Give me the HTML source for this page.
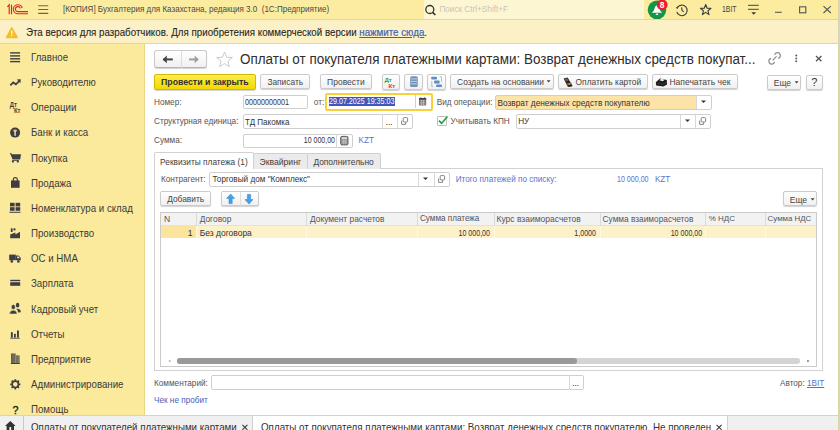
<!DOCTYPE html>
<html><head><meta charset="utf-8">
<style>
*{box-sizing:border-box;margin:0;padding:0}
html,body{width:840px;height:430px;overflow:hidden;background:#fff}
body{position:relative;font-family:"Liberation Sans",sans-serif;color:#333}
.a{position:absolute;white-space:pre}
.t{position:absolute;white-space:pre;line-height:12px;height:12px}
svg{position:absolute;overflow:visible}
/* top bar */
#top{left:0;top:0;width:840px;height:20px;background:#FBEC9F;border-bottom:1px solid #EBD98A}
#warn{left:0;top:20px;width:840px;height:24px;background:#FCF0C6;border-bottom:1px solid #DDD4B4}
#side{left:0;top:44px;width:145px;height:371px;background:#FBEA9B;border-right:1px solid #E8D689}
#main{left:145px;top:44px;width:693px;height:371px;background:#fff}
#redge{left:838px;top:0;width:2px;height:430px;background:linear-gradient(90deg,#DCD4A6 0,#DCD4A6 1px,#D4D4D4 1px)}
#bot{left:0;top:414.6px;width:840px;height:15.4px;background:#F0F0F0;border-top:1.5px solid #D2D2D2}
.side{font-size:11px;color:#3b3b3b;left:31px;transform:scaleX(.882);transform-origin:0 0;margin-top:0.1px}
.f{font-size:8.2px;color:#555;margin-top:0.9px}
.btn{position:absolute;height:16px;border:1px solid #CBCBCB;border-radius:2px;background:linear-gradient(#FFFFFF,#F0F0F0);box-shadow:0 1px 1px rgba(0,0,0,0.18)}
.inp{position:absolute;height:14px;border:1px solid #CFCFCF;border-radius:2px;background:#fff}
.num{font-size:8.2px;transform:scaleX(.866);transform-origin:100% 50%}
.numl{font-size:8.2px;transform:scaleX(.866);transform-origin:0 50%}
.sep{position:absolute;top:0;bottom:0;width:1px;background:#D4D4D4}
</style></head><body>
<div id="top" class="a"></div>
<div id="warn" class="a"></div>
<div id="side" class="a"></div>
<div id="main" class="a"></div>
<div id="bot" class="a"></div>
<div id="redge" class="a"></div>

<!-- ===== TOP BAR ===== -->
<svg style="left:0;top:0" width="60" height="20" viewBox="0 0 60 20">
  <g fill="none" stroke="#D9272E" stroke-width="1.15">
    <path d="M7.4 6.8 L9.2 4.8 V14.3"/>
    <path d="M11.5 4.6 V14.3"/>
    <path d="M22.2 8.2 A4.5 4.5 0 1 0 18.1 13.7 H28"/>
    <path d="M20.3 8.4 A2.5 2.5 0 1 0 18.1 11.6 H28"/>
  </g>
  <g stroke="#6B6455" stroke-width="1.1">
    <path d="M38.2 5.7 H48.2 M38.2 9.5 H48.2 M38.2 13.4 H48.2"/>
  </g>
</svg>
<div class="t" style="left:62.5px;top:2.95px;font-size:9.7px;color:#4a4a4a;transform:scaleX(.829);transform-origin:0 0">[КОПИЯ] Бухгалтерия для Казахстана, редакция 3.0  (1С:Предприятие)</div>
<div class="a" style="left:423.5px;top:0;width:220px;height:18.5px;background:#FDF6D3"></div>
<svg style="left:420px;top:0" width="20" height="20" viewBox="0 0 20 20">
  <circle cx="9.8" cy="9.5" r="4" fill="none" stroke="#333" stroke-width="1.3"/>
  <path d="M12.6 12.4 L15.4 15" stroke="#333" stroke-width="1.7"/>
</svg>
<div class="t" style="left:439.4px;top:3.5px;font-size:8.2px;color:#C9C4B6">Поиск Ctrl+Shift+F</div>
<svg style="left:640px;top:0" width="200" height="20" viewBox="0 0 200 20">
  <circle cx="17" cy="9.8" r="9.3" fill="#14964A"/>
  <path d="M11.8 12.8 H22.2 L20.4 11 L18.6 6.2 Q17 4.8 15.4 6.2 L13.6 11 Z" fill="#fff"/>
  <ellipse cx="17" cy="14.3" rx="1.4" ry="0.7" fill="#fff"/>
  <circle cx="22.2" cy="4.8" r="5.4" fill="#EE1D24"/>
  <text x="22.2" y="7.9" text-anchor="middle" font-family="Liberation Sans" font-weight="bold" font-size="8.4" fill="#fff">8</text>
  <!-- history -->
  <g fill="none" stroke="#3C3C3C" stroke-width="1.1">
    <path d="M37.6 7.2 A5.3 5.3 0 1 1 36.8 12"/>
    <path d="M41.6 7.4 L42 10.2 L43.6 12"/>
  </g>
  <circle cx="37.2" cy="7.7" r="1" fill="#3C3C3C"/>
  <!-- star -->
  <path d="M65.7 4.5 L67.1 8.2 L71 8.4 L68 10.8 L69 14.6 L65.7 12.4 L62.4 14.6 L63.4 10.8 L60.4 8.4 L64.3 8.2 Z" fill="none" stroke="#3C3C3C" stroke-width="1.1" stroke-linejoin="round"/>
  <g stroke="#6B6455" stroke-width="1.1"><path d="M108 5.4 H118.8 M108 9.4 H118.8"/></g>
  <path d="M111.4 12.2 H116 L113.7 14.8 Z" fill="#333"/>
  <path d="M135 12.3 H141.7" stroke="#555" stroke-width="1.1"/>
  <rect x="159.6" y="6.8" width="6.2" height="6" fill="none" stroke="#555" stroke-width="1.1"/>
  <path d="M183.5 6.2 L190.8 13 M190.8 6.2 L183.5 13" stroke="#555" stroke-width="1.1"/>
</svg>
<div class="t" style="left:722px;top:3.4px;font-size:9px;color:#444;transform:scaleX(.765);transform-origin:0 0">1BIT</div>

<!-- ===== WARNING ===== -->
<svg style="left:0;top:20px" width="24" height="24" viewBox="0 0 24 24">
  <path d="M11.8 7.6 L17.3 17.6 H6.3 Z" fill="#F4BE2A" stroke="#F4BE2A" stroke-width="1.2" stroke-linejoin="round"/>
  <rect x="11.2" y="10.6" width="1.2" height="3.6" fill="#fff"/>
  <rect x="11.2" y="15" width="1.2" height="1.2" fill="#fff"/>
</svg>
<div class="t" style="left:26px;top:26.2px;font-size:11px;color:#262626;-webkit-text-stroke:0.1px #262626;transform:scaleX(.886);transform-origin:0 0">Эта версия для разработчиков. Для приобретения коммерческой версии <span style="color:#3F63B4;-webkit-text-stroke:0.2px #3F63B4;text-decoration:underline">нажмите сюда</span>.</div>

<!-- SIDEBAR placeholder -->
<div class="t side" style="top:50.80px">Главное</div>
<div class="t side" style="top:75.97px">Руководителю</div>
<div class="t side" style="top:101.14px">Операции</div>
<div class="t side" style="top:126.31px">Банк и касса</div>
<div class="t side" style="top:151.48px">Покупка</div>
<div class="t side" style="top:176.65px">Продажа</div>
<div class="t side" style="top:201.82px">Номенклатура и склад</div>
<div class="t side" style="top:226.99px">Производство</div>
<div class="t side" style="top:252.16px">ОС и НМА</div>
<div class="t side" style="top:277.33px">Зарплата</div>
<div class="t side" style="top:302.50px">Кадровый учет</div>
<div class="t side" style="top:327.67px">Отчеты</div>
<div class="t side" style="top:352.84px">Предприятие</div>
<div class="t side" style="top:378.01px">Администрирование</div>
<div class="t side" style="top:403.18px">Помощь</div>
<svg style="left:0;top:44px" width="30" height="371" viewBox="0 44 30 371">
 <g fill="#3E3E44" stroke="none">
  <!-- Главное -->
  <rect x="10.1" y="52.2" width="10" height="1.4"/><rect x="10.1" y="55.2" width="10" height="1.4"/><rect x="10.1" y="58.1" width="10" height="1.4"/><rect x="10.1" y="60.9" width="10" height="1.4"/>
  <!-- Руководителю -->
  <path d="M10.3 85.4 L13.2 82.4 L15.9 84.3 L19.4 80.9" fill="none" stroke="#3E3E44" stroke-width="1.8"/>
  <path d="M16.8 79.6 L20.8 79.2 L20.4 83.2 Z"/>
  <!-- Операции -->
  <text x="9.8" y="107.4" font-family="Liberation Sans" font-weight="bold" font-size="6.6" transform="translate(9.8 0) scale(0.9 1) translate(-9.8 0)">Дт</text>
  <text x="14" y="113.4" font-family="Liberation Sans" font-weight="bold" font-size="6.6" transform="translate(14 0) scale(0.9 1) translate(-14 0)">Кт</text>
  <!-- Банк -->
  <circle cx="15.1" cy="132.6" r="5"/>
  <ellipse cx="15.1" cy="130.6" rx="1.9" ry="1.2" fill="#D8CB8A"/><rect x="14.4" y="131" width="1.4" height="4.8" fill="#FBEA9B"/>
  <!-- Покупка -->
  <path d="M9.8 152.8 L11.4 153.2 L11.9 154.2 H21 L20.2 159.6 H12.6 Z"/><rect x="12.2" y="160" width="6.8" height="0.8"/>
  <circle cx="12.9" cy="161.6" r="1.1"/><circle cx="17.8" cy="161.6" r="1.1"/>
  <!-- Продажа -->
  <rect x="11" y="180.4" width="8.6" height="7.4"/>
  <path d="M13.3 181 V179.6 A2 2 0 0 1 17.3 179.6 V181" fill="none" stroke="#3E3E44" stroke-width="1.1"/>
  <!-- Номенклатура -->
  <rect x="10" y="202.8" width="4.6" height="3.6"/><rect x="15.6" y="202.8" width="4.6" height="3.6"/>
  <rect x="10" y="207.2" width="4.6" height="3.6"/><rect x="15.6" y="207.2" width="4.6" height="3.6"/>
  <rect x="9.5" y="211.8" width="11" height="1"/>
  <!-- Производство -->
  <path d="M10.2 234.4 L15.4 232.6 V234.4 L20 231.8 V238.2 H10.2 Z"/>
  <rect x="10.8" y="228.2" width="1.8" height="3.8" rx="0.5"/><rect x="13.4" y="228.2" width="2.1" height="2.4" rx="0.8"/>
  <!-- ОС и НМА truck -->
  <path d="M9.2 254.6 H15.8 V260.2 H9.2 Z"/>
  <path d="M15.8 255.6 H18.6 L20.8 258 V260.2 H15.8 Z"/>
  <circle cx="11.8" cy="261.4" r="1.3"/><circle cx="18.4" cy="261.4" r="1.3"/>
  <path d="M17.2 256.6 H18.6 L19.8 258.2 H17.2 Z" fill="#FBEA9B"/>
  <!-- Зарплата card -->
  <rect x="10.2" y="279.8" width="10" height="1.4"/>
  <rect x="10.2" y="282.2" width="10" height="3.6"/>
  <!-- Кадровый -->
  <ellipse cx="17.6" cy="305.2" rx="1.7" ry="2.4"/>
  <path d="M16.4 308.8 Q20.8 308.6 20.9 312.2 L18.2 312.6 Q17.9 310.2 16.4 308.8 Z"/>
  <ellipse cx="13.3" cy="307" rx="2.1" ry="2.6" stroke="#FBEA9B" stroke-width="0.6"/>
  <path d="M9.5 314 Q9.5 310.2 13.3 310.2 Q17.1 310.2 17.1 314 Z" stroke="#FBEA9B" stroke-width="0.5"/>
  <!-- Отчеты -->
  <rect x="10.9" y="332.2" width="1.9" height="5.4"/><rect x="14" y="333.8" width="1.8" height="3.8"/><rect x="17" y="330.5" width="1.9" height="7.1"/>
  <rect x="10.2" y="337.8" width="9.6" height="0.8"/>
  <!-- Предприятие -->
  <rect x="11" y="353.5" width="4.6" height="10.2" fill="#5a584e"/>
  <rect x="15.8" y="355.3" width="3.8" height="8.4" fill="#6e6b5c"/>
  <path d="M12.2 354.2 V363 M13.4 354.2 V363 M14.6 354.2 V363 M17 356 V363 M18.3 356 V363" stroke="#8f8a70" stroke-width="0.45"/>
  <rect x="10.8" y="363" width="9" height="1" fill="#3E3E44"/>
  <!-- Администрирование gear -->
  <g transform="translate(15.3 384.3)">
   <circle r="3.2" fill="none" stroke="#3E3E44" stroke-width="1.7"/>
   <path d="M-0.9 -5.1 H0.9 L0.6 -2.6 H-0.6 Z" transform="rotate(0)"/><path d="M-0.9 -5.1 H0.9 L0.6 -2.6 H-0.6 Z" transform="rotate(45)"/><path d="M-0.9 -5.1 H0.9 L0.6 -2.6 H-0.6 Z" transform="rotate(90)"/><path d="M-0.9 -5.1 H0.9 L0.6 -2.6 H-0.6 Z" transform="rotate(135)"/><path d="M-0.9 -5.1 H0.9 L0.6 -2.6 H-0.6 Z" transform="rotate(180)"/><path d="M-0.9 -5.1 H0.9 L0.6 -2.6 H-0.6 Z" transform="rotate(225)"/><path d="M-0.9 -5.1 H0.9 L0.6 -2.6 H-0.6 Z" transform="rotate(270)"/><path d="M-0.9 -5.1 H0.9 L0.6 -2.6 H-0.6 Z" transform="rotate(315)"/>
  </g>
 </g>
 <text x="15.5" y="413.6" text-anchor="middle" font-family="Liberation Sans" font-size="10.8" fill="#222" stroke="#222" stroke-width="0.35">?</text>
</svg>

<!-- MAIN placeholder -->
<!-- nav group -->
<div class="btn" style="left:154.3px;top:50.3px;width:53px;height:17.7px;border-radius:3px;border-color:#CACACA;border-bottom-color:#B5B5B5"></div>
<div class="a" style="left:181px;top:51px;width:1px;height:16.5px;background:#DDDDDD"></div>
<svg style="left:150px;top:46px" width="90" height="26" viewBox="0 0 90 26">
  <path d="M13.4 13.4 H22.8" stroke="#454545" stroke-width="2"/>
  <path d="M12.6 13.4 L16.8 9.6 V17.2 Z" fill="#454545"/>
  <path d="M39 13.4 H48" stroke="#A0A0A0" stroke-width="2"/>
  <path d="M48.8 13.4 L44.6 9.6 V17.2 Z" fill="#A0A0A0"/>
  <path d="M74.5 6 L76.6 11.3 L82.4 11.5 L77.9 15.2 L79.4 20.7 L74.5 17.6 L69.6 20.7 L71.1 15.2 L66.6 11.5 L72.4 11.3 Z" fill="none" stroke="#BCC6CE" stroke-width="0.9" stroke-linejoin="round"/>
</svg>
<div class="a" style="left:240.4px;top:50.4px;line-height:17px;font-size:15.2px;color:#2E2E2E;transform:scaleX(.885);transform-origin:0 0">Оплаты от покупателя платежными картами: Возврат денежных средств покупат...</div>
<svg style="left:760px;top:48px" width="70" height="22" viewBox="0 0 70 22">
  <g fill="none" stroke="#8A8A8A" stroke-width="1.2">
    <path d="M14.6 6.85 A2.9 2.9 0 1 1 18.15 10.4"/>
    <path d="M14.6 13.95 A2.9 2.9 0 1 1 11.05 10.4"/>
    <path d="M12.6 12.4 L16.6 8.4"/>
  </g>
  <circle cx="36.25" cy="7.5" r="0.95" fill="#555"/><circle cx="36.25" cy="10.4" r="0.95" fill="#555"/><circle cx="36.25" cy="13.3" r="0.95" fill="#555"/>
  <path d="M56 8 L61.4 13.2 M61.4 8 L56 13.2" stroke="#555" stroke-width="1.3"/>
</svg>

<!-- command bar -->
<div class="btn" style="left:154px;top:74.2px;width:102px;height:15.6px;border-color:#D3BA00;background:linear-gradient(#FFEC4D,#F4D800);border-radius:2px"></div>
<div class="t" style="left:161px;top:76px;font-size:8.76px;font-weight:bold;color:#333">Провести и закрыть</div>
<div class="btn" style="left:260.2px;top:74.3px;width:50px;height:15.2px"></div>
<div class="t" style="left:267.4px;top:76px;font-size:8.35px;color:#444">Записать</div>
<div class="btn" style="left:319.9px;top:74.3px;width:51.8px;height:15.2px"></div>
<div class="t" style="left:327.1px;top:76px;font-size:8.5px;color:#444">Провести</div>
<div class="btn" style="left:381.8px;top:74.2px;width:18.5px;height:15.4px"></div>
<div class="btn" style="left:404.2px;top:74.2px;width:19px;height:15.4px"></div>
<div class="btn" style="left:427.4px;top:74.2px;width:18.6px;height:15.4px"></div>
<svg style="left:378px;top:72px" width="72" height="20" viewBox="0 0 72 20">
  <text x="6.4" y="10.2" font-family="Liberation Sans" font-weight="bold" font-size="6.2" fill="#3C9C2C">Дт</text>
  <text x="10.6" y="16.2" font-family="Liberation Sans" font-weight="bold" font-size="6.2" fill="#E8342E">Кт</text>
  <rect x="32.1" y="4.3" width="7.7" height="10.7" rx="1.6" fill="#7093B8"/>
  <path d="M32.6 6.9 H39.3 M32.6 9.4 H39.3 M32.6 11.9 H39.3" stroke="#E6EEF6" stroke-width="0.7"/>
  <g fill="#5E8DBF">
   <rect x="53.2" y="4.8" width="5.8" height="2.6" rx="0.8"/><rect x="56.1" y="8.5" width="5.5" height="3" rx="0.6"/><rect x="58.2" y="12.5" width="5.7" height="2.4" rx="0.5"/>
  </g>
  <path d="M53.8 9 V14.6 H55.2 M61.6 4.8 H63.5 V10" fill="none" stroke="#8FB0D4" stroke-width="0.8"/>
</svg>
<div class="btn" style="left:450px;top:74.3px;width:104.3px;height:15.2px"></div>
<div class="t" style="left:457.1px;top:76px;font-size:8.38px;color:#444">Создать на основании</div>
<svg style="left:546px;top:79px" width="6" height="5" viewBox="0 0 6 5"><path d="M0.6 1.2 H4.6 L2.6 3.4 Z" fill="#444"/></svg>
<div class="btn" style="left:558.4px;top:74.4px;width:89.2px;height:15px"></div>
<svg style="left:555px;top:72px" width="24" height="20" viewBox="0 0 24 20">
  <path d="M8.6 6.6 L12.6 5.4 L17.2 13.2 Q17.4 14.4 16.2 14.8 L13.6 14.9 L12.6 14.6 Z" fill="#2E2424"/>
  <path d="M9.8 6.9 L12.2 6.2 L13.6 8.6 L11 9.4 Z" fill="#6A5A5A"/>
  <circle cx="12.6" cy="12.2" r="0.95" fill="#E23A2A"/><circle cx="14.2" cy="11.9" r="0.9" fill="#E8B42A"/><circle cx="15.7" cy="11.5" r="0.9" fill="#3AA83A"/>
</svg>
<div class="t" style="left:575.6px;top:76px;font-size:8.39px;color:#444">Оплатить картой</div>
<div class="btn" style="left:652.4px;top:74.4px;width:85.2px;height:15px"></div>
<svg style="left:648px;top:72px" width="24" height="20" viewBox="0 0 24 20">
  <path d="M7.8 10.2 L12 6.4 L18.8 8 L19 12.4 L15.4 14.6 L8.2 13.4 Z" fill="#1C1C1C"/>
  <path d="M11.4 8.2 L13.2 6.8 L16.6 7.8 L14.8 9.2 Z" fill="#F4F4F4"/>
  <path d="M9 11 L15 12.2 L18.4 10.2" fill="none" stroke="#555" stroke-width="0.5"/>
</svg>
<div class="t" style="left:669.4px;top:76px;font-size:8.55px;color:#444">Напечатать чек</div>
<div class="btn" style="left:767.4px;top:74.8px;width:33.3px;height:14.8px"></div>
<div class="t" style="left:773.8px;top:77px;font-size:8.5px;color:#444">Еще</div>
<svg style="left:793.6px;top:79.6px" width="6" height="5" viewBox="0 0 6 5"><path d="M0.6 1.2 H4.6 L2.6 3.4 Z" fill="#444"/></svg>
<div class="btn" style="left:805.5px;top:74.8px;width:17.8px;height:14.8px"></div>
<div class="t" style="left:811.2px;top:76.4px;font-size:11px;color:#333">?</div>

<!-- row 1 -->
<div class="t f" style="left:154px;top:96px">Номер:</div>
<div class="inp" style="left:243.4px;top:95.3px;width:64.8px;height:14.2px"></div>
<div class="t f numl" style="left:244.8px;top:96px;color:#333;transform:scaleX(.88)">00000000001</div>
<div class="t f" style="left:313.8px;top:96px">от:</div>
<div class="a" style="left:325.4px;top:92.9px;width:107.5px;height:18.4px;border:2px solid #F8D03C;border-radius:2px;background:#fff"></div>
<div class="a" style="left:328.9px;top:96.9px;width:66.4px;height:9.2px;background:#4056B8"></div>
<div class="t f numl" style="left:329px;top:95.6px;color:#fff;font-size:8.2px;transform:scaleX(.871)">29.07.2025 19:35:03</div>
<div class="a" style="left:415.2px;top:95.2px;width:1px;height:13px;background:#D0D0D0"></div>
<svg style="left:418px;top:96px" width="10" height="12" viewBox="0 0 10 12">
  <rect x="1" y="2" width="7.2" height="7.4" rx="0.9" fill="#707070"/>
  <path d="M1.8 4.6 H7.4 M1.8 6.4 H7.4 M1.8 8 H7.4 M3.6 4 V9 M5.5 4 V9" stroke="#ddd" stroke-width="0.5"/>
  <path d="M2.8 1.2 V2.6 M6.4 1.2 V2.6" stroke="#555" stroke-width="0.9"/><rect x="1" y="2" width="7.2" height="1.6" fill="#444"/>
</svg>
<div class="t f" style="left:436.7px;top:96px">Вид операции:</div>
<div class="inp" style="left:495.3px;top:95.4px;width:216.5px;height:14.3px;background:linear-gradient(90deg,#FCE4A8 0,#FCE4A8 200.5px,#fff 200.5px)"></div>
<div class="a" style="left:696px;top:95.4px;width:1px;height:13.6px;background:#D8D8D8"></div>
<div class="t f" style="left:497.4px;top:96px;color:#333;font-size:8.3px">Возврат денежных средств покупателю</div>
<svg style="left:700px;top:99px" width="8" height="6" viewBox="0 0 8 6"><path d="M1 1.4 H6 L3.5 4 Z" fill="#333"/></svg>

<!-- row 2 -->
<div class="t f" style="left:154px;top:115.4px">Структурная единица:</div>
<div class="inp" style="left:243.4px;top:114.4px;width:169.9px;height:14.7px"></div>
<div class="a" style="left:382px;top:114.4px;width:1px;height:14px;background:#D8D8D8"></div>
<div class="a" style="left:397.4px;top:114.4px;width:1px;height:14px;background:#D8D8D8"></div>
<div class="t f" style="left:245.4px;top:115.2px;color:#333;font-size:8.6px;transform:scaleX(.936);transform-origin:0 0">ТД Пакомка</div>
<div class="t f" style="left:385.8px;top:116px;color:#222">...</div>
<svg style="left:398px;top:114px" width="14" height="14" viewBox="0 0 14 14">
  <rect x="5.2" y="3.6" width="4.4" height="4.4" rx="0.9" fill="#fff" stroke="#666" stroke-width="0.8"/>
  <path d="M3.6 6.6 V10.2 Q3.6 10.4 3.9 10.4 H7.6 V8.4" fill="none" stroke="#666" stroke-width="0.8"/>
</svg>
<div class="a" style="left:437.2px;top:115.7px;width:10px;height:10px;border:1px solid #BEBEBE;border-radius:1px;background:#fff"></div>
<svg style="left:436px;top:113px" width="14" height="14" viewBox="0 0 14 14"><path d="M3 7.6 L5.6 10.4 L11.4 3.4" fill="none" stroke="#1E9A3C" stroke-width="1.6"/></svg>
<div class="t f" style="left:450.6px;top:115.4px">Учитывать КПН</div>
<div class="inp" style="left:516.1px;top:114.2px;width:195.3px;height:14.4px"></div>
<div class="a" style="left:680.4px;top:114.6px;width:1px;height:13.7px;background:#D8D8D8"></div>
<div class="a" style="left:695.4px;top:114.6px;width:1px;height:13.7px;background:#D8D8D8"></div>
<div class="t f" style="left:518.2px;top:115.4px;color:#333">НУ</div>
<svg style="left:684px;top:118px" width="8" height="6" viewBox="0 0 8 6"><path d="M1 1.4 H6 L3.5 4 Z" fill="#333"/></svg>
<svg style="left:696px;top:114px" width="14" height="14" viewBox="0 0 14 14">
  <rect x="5.2" y="3.6" width="4.4" height="4.4" rx="0.9" fill="#fff" stroke="#666" stroke-width="0.8"/>
  <path d="M3.6 6.6 V10.2 Q3.6 10.4 3.9 10.4 H7.6 V8.4" fill="none" stroke="#666" stroke-width="0.8"/>
</svg>

<!-- row 3 -->
<div class="t f" style="left:154px;top:134.5px">Сумма:</div>
<div class="inp" style="left:243.4px;top:133.5px;width:109.9px;height:14.7px"></div>
<div class="a" style="left:336.3px;top:133.5px;width:1px;height:14px;background:#D8D8D8"></div>
<div class="t f num" style="left:235.2px;top:134.5px;width:100px;text-align:right;color:#333;transform:scaleX(.855)">10 000,00</div>
<svg style="left:338px;top:134px" width="14" height="14" viewBox="0 0 14 14">
  <rect x="2.7" y="2.4" width="7.3" height="8.5" rx="1.2" fill="#9A9A9A" stroke="#505050" stroke-width="0.9"/>
  <rect x="3.8" y="3.4" width="5.1" height="1.4" fill="#EDEDED"/>
  <path d="M3.6 6.8 H9.2 M3.6 8.6 H9.2 M5.5 5.6 V10.6 M7.3 5.6 V10.6" stroke="#C8C8C8" stroke-width="0.5"/>
</svg>
<div class="t f" style="left:358.6px;top:134.5px;color:#5A74CF">KZT</div>

<!-- tabs -->
<div class="a" style="left:154.4px;top:168.3px;width:669px;height:203.2px;border:1px solid #D2D2D2"></div>
<div class="a" style="left:253.3px;top:152.5px;width:54.5px;height:16.3px;background:#EBEBEB;border:1px solid #CFCFCF;border-bottom:none;border-radius:2px 2px 0 0"></div>
<div class="a" style="left:307.3px;top:152.5px;width:73.3px;height:16.3px;background:#EBEBEB;border:1px solid #CFCFCF;border-bottom:none;border-radius:2px 2px 0 0"></div>
<div class="a" style="left:154.4px;top:152.3px;width:99.4px;height:17.2px;background:#fff;border:1px solid #D2D2D2;border-bottom:none;border-radius:2px 2px 0 0"></div>
<div class="t f" style="left:160.1px;top:155px;color:#404040;font-size:8.3px">Реквизиты платежа (1)</div>
<div class="t f" style="left:259.5px;top:155px;color:#404040;font-size:8.65px">Эквайринг</div>
<div class="t f" style="left:313.4px;top:155px;color:#404040;font-size:8.4px">Дополнительно</div>

<!-- panel content -->
<div class="t f" style="left:160.9px;top:173.5px">Контрагент:</div>
<div class="inp" style="left:209.2px;top:172.4px;width:240.8px;height:14.8px"></div>
<div class="a" style="left:418.4px;top:172.4px;width:1px;height:14.1px;background:#D8D8D8"></div>
<div class="a" style="left:434px;top:172.4px;width:1px;height:14.1px;background:#D8D8D8"></div>
<div class="t f" style="left:212.5px;top:173.5px;color:#333">Торговый дом "Комплекс"</div>
<svg style="left:422px;top:176px" width="8" height="6" viewBox="0 0 8 6"><path d="M1 1.4 H6 L3.5 4 Z" fill="#333"/></svg>
<svg style="left:434.5px;top:172px" width="14" height="14" viewBox="0 0 14 14">
  <rect x="5.2" y="3.6" width="4.4" height="4.4" rx="0.9" fill="#fff" stroke="#666" stroke-width="0.8"/>
  <path d="M3.6 6.6 V10.2 Q3.6 10.4 3.9 10.4 H7.6 V8.4" fill="none" stroke="#666" stroke-width="0.8"/>
</svg>
<div class="t f" style="left:455.7px;top:173px;color:#5A74CF">Итого платежей по списку:</div>
<div class="t f numl" style="left:617px;top:173px;color:#5A74CF">10 000,00</div>
<div class="t f" style="left:654.9px;top:173px;color:#5A74CF">KZT</div>

<div class="btn" style="left:160.1px;top:191px;width:50.9px;height:15.4px"></div>
<div class="t" style="left:167.2px;top:193.4px;font-size:8.4px;color:#444">Добавить</div>
<div class="btn" style="left:221.3px;top:191px;width:37.3px;height:15.4px"></div>
<div class="a" style="left:240.2px;top:192.3px;width:1px;height:13.6px;background:#DDD"></div>
<svg style="left:221px;top:191px" width="38" height="16" viewBox="0 0 38 16">
  <path d="M9.6 3 L13.6 7.4 H11.2 V12.6 H8 V7.4 H5.6 Z" fill="#43A3E6" stroke="#2A7FC0" stroke-width="0.5" stroke-linejoin="round"/>
  <path d="M28 13 L32 8.6 H29.6 V3.4 H26.4 V8.6 H24 Z" fill="#43A3E6" stroke="#2A7FC0" stroke-width="0.5" stroke-linejoin="round"/>
</svg>
<div class="btn" style="left:783.3px;top:191.1px;width:33.3px;height:15.2px"></div>
<div class="t" style="left:789.8px;top:194px;font-size:8.5px;color:#444">Еще</div>
<svg style="left:809.6px;top:196.6px" width="6" height="5" viewBox="0 0 6 5"><path d="M0.6 1.2 H4.6 L2.6 3.4 Z" fill="#444"/></svg>

<!-- table -->
<div class="a" style="left:160.4px;top:211.8px;width:657px;height:155.4px;border:1px solid #CACACA;background:#fff"></div>
<div class="a" style="left:161.4px;top:212.8px;width:655px;height:13.4px;background:#F2F2F2;border-bottom:1px solid #E2E2E2"></div>
<div class="a" style="left:161.4px;top:226.2px;width:655px;height:11.6px;background:#FDF1C9"></div>
<div class="a" style="left:161.4px;top:226.2px;width:34.8px;height:11.6px;background:#FBE49C"></div>
<div class="a" style="left:196.2px;top:212.8px;width:1px;height:13.4px;background:#DADADA"></div>
<div class="a" style="left:306.4px;top:212.8px;width:1px;height:13.4px;background:#DADADA"></div>
<div class="a" style="left:416.6px;top:212.8px;width:1px;height:13.4px;background:#DADADA"></div>
<div class="a" style="left:493.8px;top:212.8px;width:1px;height:13.4px;background:#DADADA"></div>
<div class="a" style="left:599.6px;top:212.8px;width:1px;height:13.4px;background:#DADADA"></div>
<div class="a" style="left:705.2px;top:212.8px;width:1px;height:13.4px;background:#DADADA"></div>
<div class="a" style="left:764.6px;top:212.8px;width:1px;height:13.4px;background:#DADADA"></div>
<div class="a" style="left:196.2px;top:226.2px;width:1px;height:11.6px;background:#FFF8E4"></div>
<div class="a" style="left:306.4px;top:226.2px;width:1px;height:11.6px;background:#FFF8E4"></div>
<div class="a" style="left:416.6px;top:226.2px;width:1px;height:11.6px;background:#FFF8E4"></div>
<div class="a" style="left:493.8px;top:226.2px;width:1px;height:11.6px;background:#FFF8E4"></div>
<div class="a" style="left:599.6px;top:226.2px;width:1px;height:11.6px;background:#FFF8E4"></div>
<div class="a" style="left:705.2px;top:226.2px;width:1px;height:11.6px;background:#FFF8E4"></div>
<div class="a" style="left:764.6px;top:226.2px;width:1px;height:11.6px;background:#FFF8E4"></div>
<div class="t f" style="left:164px;top:212.6px;font-size:8.6px;color:#555">N</div>
<div class="t f" style="left:199.7px;top:212.6px;font-size:8.4px;color:#555">Договор</div>
<div class="t f" style="left:310px;top:212.6px;font-size:8.4px;color:#555">Документ расчетов</div>
<div class="t f" style="left:420px;top:212.6px;font-size:8.14px;color:#555">Сумма платежа</div>
<div class="t f" style="left:496.5px;top:212.6px;font-size:8.5px;color:#555">Курс взаиморасчетов</div>
<div class="t f" style="left:602.6px;top:212.6px;font-size:8.31px;color:#555">Сумма взаиморасчетов</div>
<div class="t f" style="left:708.7px;top:212.6px;font-size:8px;color:#555">% НДС</div>
<div class="t f" style="left:767.6px;top:212.6px;font-size:7.9px;color:#555">Сумма НДС</div>
<div class="t f" style="left:160px;top:226.4px;width:32.6px;text-align:right;font-size:8.6px;color:#333">1</div>
<div class="t f" style="left:199.7px;top:226.4px;font-size:8.47px;color:#333">Без договора</div>
<div class="t f num" style="left:400px;top:227.2px;width:90px;text-align:right;color:#333">10 000,00</div>
<div class="t f num" style="left:500px;top:227.2px;width:96px;text-align:right;color:#333">1,0000</div>
<div class="t f num" style="left:602px;top:227.2px;width:100.2px;text-align:right;color:#333">10 000,00</div>
<!-- scrollbar -->
<div class="a" style="left:177.4px;top:358.2px;width:622.6px;height:5.4px;border-radius:2.7px;background:#D4D4D4"></div>
<div class="a" style="left:177.4px;top:358.2px;width:400px;height:5.4px;border-radius:2.7px;background:#999999"></div>
<svg style="left:160px;top:352px" width="660" height="14" viewBox="0 0 660 14">
  <path d="M8.4 8.9 L10.4 7.9 V9.9 Z" fill="#888"/>
  <path d="M649.4 8.9 L647.4 7.9 V9.9 Z" fill="#333"/>
</svg>


<div class="t f" style="left:154px;top:377px">Комментарий:</div>
<div class="inp" style="left:211px;top:375.3px;width:373.3px;height:15.0px"></div>
<div class="a" style="left:568.6px;top:375.3px;width:1px;height:14.3px;background:#D8D8D8"></div>
<div class="t f" style="left:572.2px;top:377.2px;color:#222">...</div>
<div class="t f" style="left:154px;top:394px;color:#3F5FB8">Чек не пробит</div>
<div class="t f" style="left:780px;top:376.7px;color:#555">Автор: <span style="color:#4F74C8;text-decoration:underline">1BIT</span></div>


<!-- BOTTOM placeholder -->
<div class="a" style="left:23.2px;top:416px;width:1px;height:14px;background:#C8C8C8"></div>
<svg style="left:0;top:414px" width="24" height="16" viewBox="0 0 24 16">
  <path d="M10.3 7 L15.6 12 H14 V16 H6.6 V12 H5 Z" fill="#333"/>
  <rect x="9.4" y="13" width="1.8" height="3" fill="#F0F0F0"/>
</svg>
<div class="a" style="left:252.4px;top:416px;width:1px;height:14px;background:#D0D0D0"></div>
<div class="a" style="left:253.4px;top:416px;width:473.8px;height:14px;background:#fff"></div>
<div class="a" style="left:727.2px;top:416px;width:1px;height:14px;background:#D0D0D0"></div>
<div class="a" style="left:31.4px;top:420.5px;line-height:12px;font-size:11px;color:#333;transform:scaleX(.8845);transform-origin:0 0">Оплаты от покупателей платежными картами</div>
<div class="a" style="left:261.3px;top:420.5px;line-height:12px;font-size:11px;color:#333;transform:scaleX(.89);transform-origin:0 0">Оплаты от покупателя платежными картами: Возврат денежных средств покупателю. Не проведен</div>
<svg style="left:0;top:414px" width="840" height="16" viewBox="0 0 840 16">
  <path d="M242.4 10.8 L247.4 15.8 M247.4 10.8 L242.4 15.8" stroke="#333" stroke-width="1.05"/>
  <path d="M716.6 10.8 L721.6 15.8 M721.6 10.8 L716.6 15.8" stroke="#333" stroke-width="1.05"/>
</svg>

</body></html>
